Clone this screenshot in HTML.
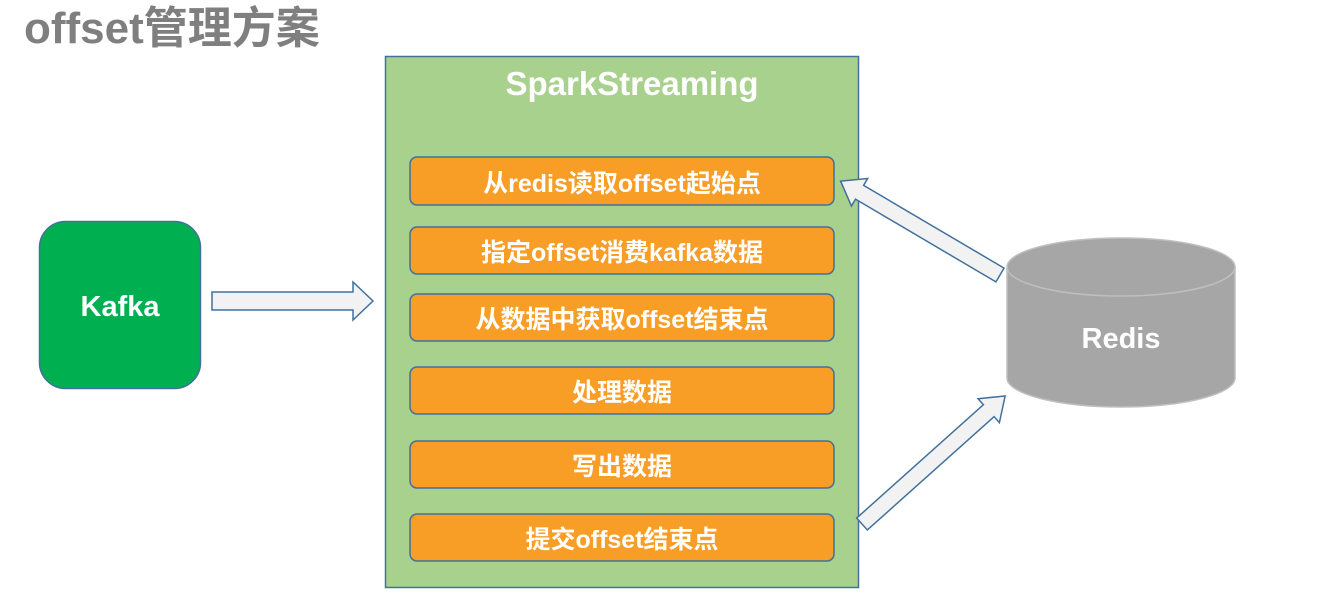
<!DOCTYPE html>
<html><head><meta charset="utf-8"><style>
html,body{margin:0;padding:0;background:#fff;width:1337px;height:599px;overflow:hidden}
svg text{font-family:"Liberation Sans","Noto Sans CJK SC",sans-serif;font-weight:bold}
</style></head><body>
<svg width="1337" height="599" viewBox="0 0 1337 599" xmlns="http://www.w3.org/2000/svg">
<text x="24" y="43" font-size="44" fill="#7f7f7f">offset管理方案</text>
<rect x="385.5" y="56.5" width="473" height="531" fill="#a9d18e" stroke="#41719c" stroke-width="1.5"/>
<text x="632" y="95" font-size="33" fill="#fff" text-anchor="middle">SparkStreaming</text>
<g fill="#f89d26" stroke="#41719c" stroke-width="1.5">
<rect x="410" y="157" width="424" height="48" rx="7"/>
<rect x="410" y="227" width="424" height="47" rx="7"/>
<rect x="410" y="294" width="424" height="47" rx="7"/>
<rect x="410" y="367" width="424" height="47" rx="7"/>
<rect x="410" y="441" width="424" height="47" rx="7"/>
<rect x="410" y="514" width="424" height="47" rx="7"/>
</g>
<g font-size="25" fill="#fff" text-anchor="middle">
<text x="622" y="192">从redis读取offset起始点</text>
<text x="622" y="261">指定offset消费kafka数据</text>
<text x="622" y="328">从数据中获取offset结束点</text>
<text x="622" y="401">处理数据</text>
<text x="622" y="475">写出数据</text>
<text x="622" y="548">提交offset结束点</text>
</g>
<rect x="39.5" y="221.5" width="161" height="167" rx="26" fill="#00b050" stroke="#41719c" stroke-width="1.5"/>
<text x="120" y="316" font-size="29" fill="#fff" text-anchor="middle">Kafka</text>
<polygon points="212,292 353,292 353,282 373,301 353,320 353,310 212,310" fill="#f2f2f2" stroke="#41719c" stroke-width="1.5"/>
<g fill="#f2f2f2" stroke="#41719c" stroke-width="1.5">
<polygon transform="translate(1000,275) rotate(210.5)" points="0,-8 163,-8 163,-16 185,0 163,16 163,8 0,8"/>
<polygon transform="translate(862,524) rotate(-41.8)" points="0,-8 170,-8 170,-16 192,0 170,16 170,8 0,8"/>
</g>
<g fill="#a6a6a6" stroke="#bfbfbf" stroke-width="1.5">
<path d="M1007,267 L1007,378 A114,29 0 0 0 1235,378 L1235,267"/>
<ellipse cx="1121" cy="267" rx="114" ry="29"/>
</g>
<text x="1121" y="348" font-size="29" fill="#fff" text-anchor="middle">Redis</text>
</svg>
</body></html>
